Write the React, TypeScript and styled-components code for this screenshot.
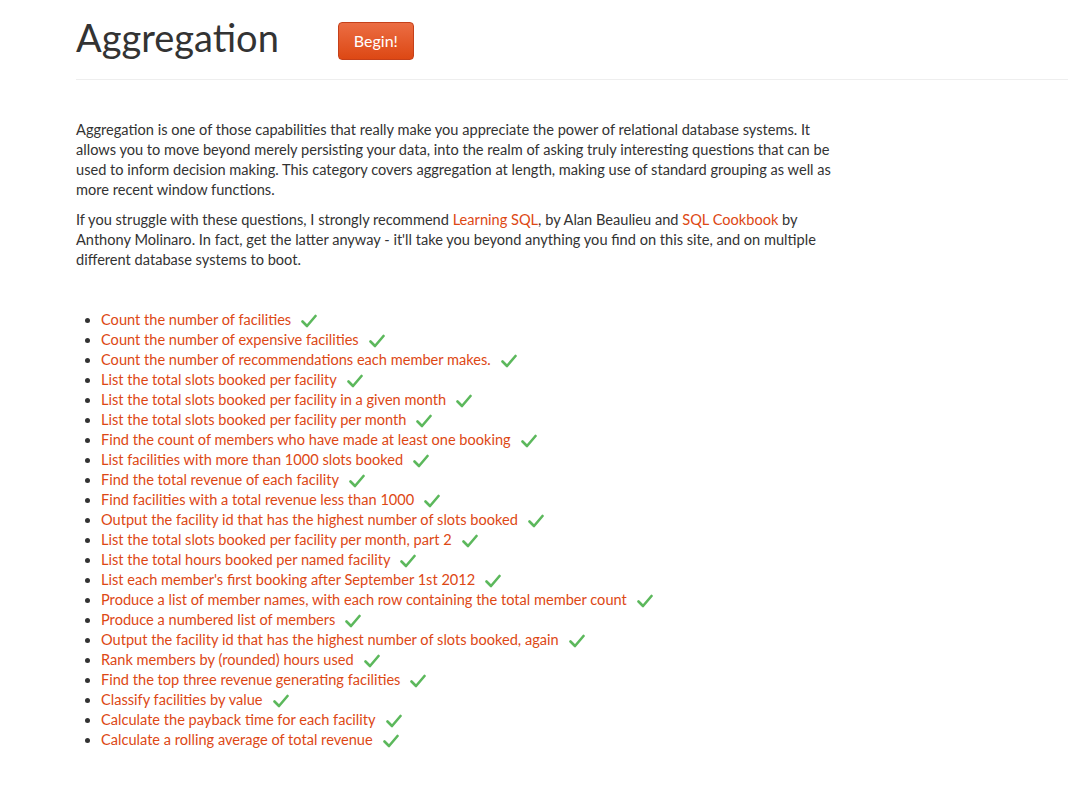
import React from 'react';
import styled, {createGlobalStyle} from 'styled-components';

const textColour = '#333333';
const linkColour = '#dd4814';
const tickColour = '#5cb85c';

const GlobalStyle = createGlobalStyle`
  body {
    margin: 0;
    background: #ffffff;
    color: ${textColour};
    font-family: Lato, "Open Sans", sans-serif;
    font-size: 14.6px;
    line-height: 20px;
  }
`;

const Page = styled.div`
  padding-left: 76px;
`;

const Header = styled.div`
  display: flex;
  align-items: center;
  height: 79px;
  border-bottom: 1px solid #eeeeee;
`;

const Title = styled.h1`
  margin: 0 59px 0 0;
  font-size: 38px;
  font-weight: 400;
  line-height: 40px;
  color: ${textColour};
  position: relative;
  top: -3px;
`;

const BeginButton = styled.a`
  display: inline-flex;
  align-items: center;
  justify-content: center;
  width: 76px;
  height: 38px;
  box-sizing: border-box;
  border-radius: 4px;
  border: 1px solid #c5401a;
  background: linear-gradient(#eb6d43, #dd4814);
  color: #ffffff;
  font-size: 16px;
  text-decoration: none;
  position: relative;
  top: 1px;
`;

const Intro = styled.div`
  width: 766px;
  padding-top: 40px;
`;

const Para = styled.p`
  margin: 0 0 10px;
`;

const Link = styled.a`
  color: ${linkColour};
  text-decoration: none;
`;

const List = styled.ul`
  margin: 40px 0 0;
  padding-left: 25px;
`;

const Item = styled.li`
  color: ${textColour};
  height: 20px;
`;

const ItemLink = styled.a`
  color: ${linkColour};
  text-decoration: none;
`;

const Tick = styled.svg`
  margin-left: 10px;
  vertical-align: -3px;
`;

const questions = [
  'Count the number of facilities',
  'Count the number of expensive facilities',
  'Count the number of recommendations each member makes.',
  'List the total slots booked per facility',
  'List the total slots booked per facility in a given month',
  'List the total slots booked per facility per month',
  'Find the count of members who have made at least one booking',
  'List facilities with more than 1000 slots booked',
  'Find the total revenue of each facility',
  'Find facilities with a total revenue less than 1000',
  'Output the facility id that has the highest number of slots booked',
  'List the total slots booked per facility per month, part 2',
  'List the total hours booked per named facility',
  "List each member's first booking after September 1st 2012",
  'Produce a list of member names, with each row containing the total member count',
  'Produce a numbered list of members',
  'Output the facility id that has the highest number of slots booked, again',
  'Rank members by (rounded) hours used',
  'Find the top three revenue generating facilities',
  'Classify facilities by value',
  'Calculate the payback time for each facility',
  'Calculate a rolling average of total revenue',
];

const Check = () => (
  <Tick width="16" height="14" viewBox="0 0 16 14">
    <path
      d="M1.5 7.5 L6 12 L14.5 2"
      fill="none"
      stroke={tickColour}
      strokeWidth="2.6"
      strokeLinecap="round"
      strokeLinejoin="round"
    />
  </Tick>
);

export default function App() {
  return (
    <Page>
      <GlobalStyle />
      <Header>
        <Title>Aggregation</Title>
        <BeginButton href="#">Begin!</BeginButton>
      </Header>
      <Intro>
        <Para>
          Aggregation is one of those capabilities that really make you appreciate the power of
          relational database systems. It allows you to move beyond merely persisting your data,
          into the realm of asking truly interesting questions that can be used to inform decision
          making. This category covers aggregation at length, making use of standard grouping as
          well as more recent window functions.
        </Para>
        <Para>
          If you struggle with these questions, I strongly recommend{' '}
          <Link href="#">Learning SQL</Link>, by Alan Beaulieu and{' '}
          <Link href="#">SQL Cookbook</Link> by Anthony Molinaro. In fact, get the latter anyway -
          it'll take you beyond anything you find on this site, and on multiple different database
          systems to boot.
        </Para>
      </Intro>
      <List>
        {questions.map(q => (
          <Item key={q}>
            <ItemLink href="#">{q}</ItemLink>
            <Check />
          </Item>
        ))}
      </List>
    </Page>
  );
}
